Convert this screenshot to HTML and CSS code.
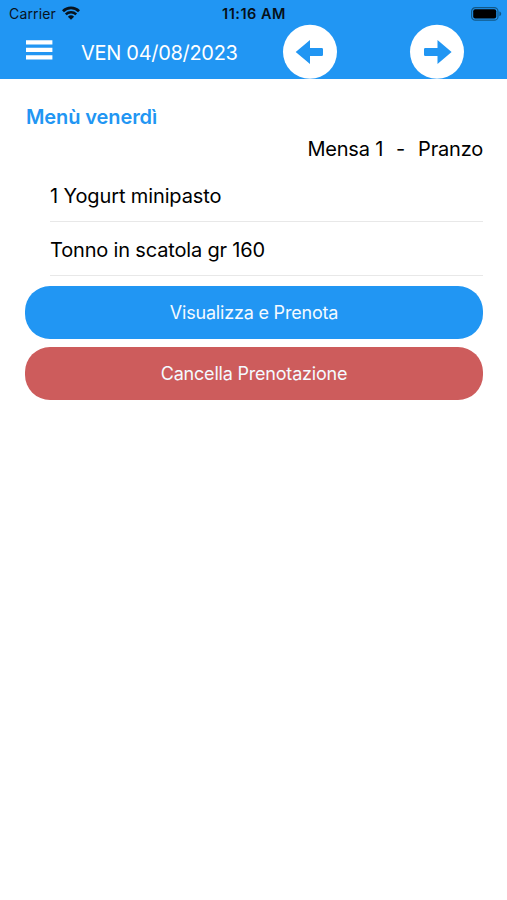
FILE: index.html
```html
<!DOCTYPE html>
<html lang="it">
<head>
<meta charset="utf-8">
<meta name="viewport" content="width=device-width, initial-scale=1">
<title>Menù venerdì</title>
<link rel="stylesheet" href="styles.css">
</head>
<body>
<header class="header">
  <div class="status">
    <div class="carrier"><span>Carrier</span>
      <svg class="wifi" width="18" height="14" viewBox="0 0 18 14"><path d="M1 5.2a11.4 11.4 0 0 1 16 0" fill="none" stroke="currentColor" stroke-width="2.8"/><path d="M3.8 8.3a7.4 7.4 0 0 1 10.4 0" fill="none" stroke="currentColor" stroke-width="2.5"/><path d="M9 13.8 5.9 10.7a4.5 4.5 0 0 1 6.2 0z" fill="currentColor"/></svg>
    </div>
    <div class="time">11:16 AM</div>
    <svg class="battery" width="31" height="14" viewBox="0 0 31 14"><rect x=".6" y=".6" width="26.4" height="12.6" rx="3.8" fill="none" stroke="#125887" stroke-width="1.2"/><rect x="2.2" y="2.2" width="23" height="9.4" rx="2" fill="#000"/><path d="M28.4 4.6c2.4.7 2.4 4 0 4.7z" fill="#125887"/></svg>
  </div>
  <div class="toolbar">
    <svg class="menu" width="27" height="20" viewBox="0 0 27 20"><path d="M0 2.4h26.4M0 9.9h26.4M0 17.4h26.4" stroke="#fff" stroke-width="4.1"/></svg>
    <h1 class="date">VEN 04/08/2023</h1>
    <svg class="prev" width="54" height="54" viewBox="0 0 54 54"><circle cx="27" cy="26.8" r="27" fill="#fff"/><path d="M12.7 27 27 15v8h11.7q1.3 0 1.3 1.3v5.4q0 1.3-1.3 1.3H27v8z" fill="#2196f3"/></svg>
    <svg class="next" width="54" height="54" viewBox="0 0 54 54"><circle cx="27" cy="26.8" r="27" fill="#fff"/><path d="M41.6 27 27.5 15v8H15.3q-1.3 0-1.3 1.3v5.4q0 1.3 1.3 1.3h12.2v8z" fill="#2196f3"/></svg>
  </div>
</header>
<main class="content">
  <h2 class="title">Menù venerdì</h2>
  <div class="meal"><span>Mensa 1</span><span class="dash">-</span><span>Pranzo</span></div>
  <ul class="dishes">
    <li>1 Yogurt minipasto</li>
    <li>Tonno in scatola gr 160</li>
  </ul>
  <div class="actions">
    <button class="button book">Visualizza e Prenota</button>
    <button class="button cancel">Cancella Prenotazione</button>
  </div>
</main>
</body>
</html>
```
FILE: styles.css
```css
* { box-sizing: border-box; }
body {
  margin: 0;
  min-height: 900px;
  background: #fff;
  color: #000;
  font-family: Inter, "Liberation Sans", sans-serif;
}
svg { display: block; flex: none; overflow: visible; }
.header { height: 79px; background: #2196f3; }
.status {
  display: grid;
  grid-template-columns: 1fr auto 1fr;
  height: 25px;
  padding: 0 5px 0 9px;
  align-items: center;
  font-size: 14px;
  line-height: 27px;
  color: #08131d;
}
.carrier { display: flex; align-items: center; gap: 6px; letter-spacing: .15px; }
.wifi { margin-top: -2px; }
.time { margin-right: 3px; font-size: 14.5px; font-weight: 600; letter-spacing: .5px; color: #061018; }
.battery { justify-self: end; }
.toolbar { display: flex; height: 54px; align-items: center; color: #fff; }
.menu { margin: -4px 0 0 26px; }
.date {
  width: 202px;
  margin: 0;
  padding: 1px 0 0 28px;
  font-size: 20px;
  font-weight: 400;
  line-height: 28px;
  letter-spacing: -.3px;
  white-space: nowrap;
}
.prev { margin-left: 28px; }
.next { margin-left: 73px; }
.content { padding: 23px 24px 0 25px; }
.title {
  margin: 0 0 0 1px;
  font-size: 20px;
  font-weight: 600;
  line-height: 31px;
  letter-spacing: -.1px;
  color: #2196f3;
}
.meal {
  display: flex;
  justify-content: flex-end;
  font-size: 20px;
  line-height: 32px;
  letter-spacing: -.2px;
}
.dash { margin: 0 13px; }
.dishes { margin: 3px 0 0 25px; padding: 0; list-style: none; }
.dishes li {
  height: 54px;
  border-bottom: 1px solid #e8e8e8;
  font-size: 20px;
  line-height: 56px;
  letter-spacing: -.12px;
}
.dishes li + li { letter-spacing: -.17px; }
.actions { display: flex; flex-direction: column; gap: 8px; margin-top: 10px; }
.button {
  height: 53px;
  padding: 0;
  border: 0;
  border-radius: 25px;
  font: 400 18px/53px Inter, "Liberation Sans", sans-serif;
  letter-spacing: -.2px;
  color: #f4faff;
}
.book { background: #2196f3; }
.cancel { background: #cd5c5c; }
```
